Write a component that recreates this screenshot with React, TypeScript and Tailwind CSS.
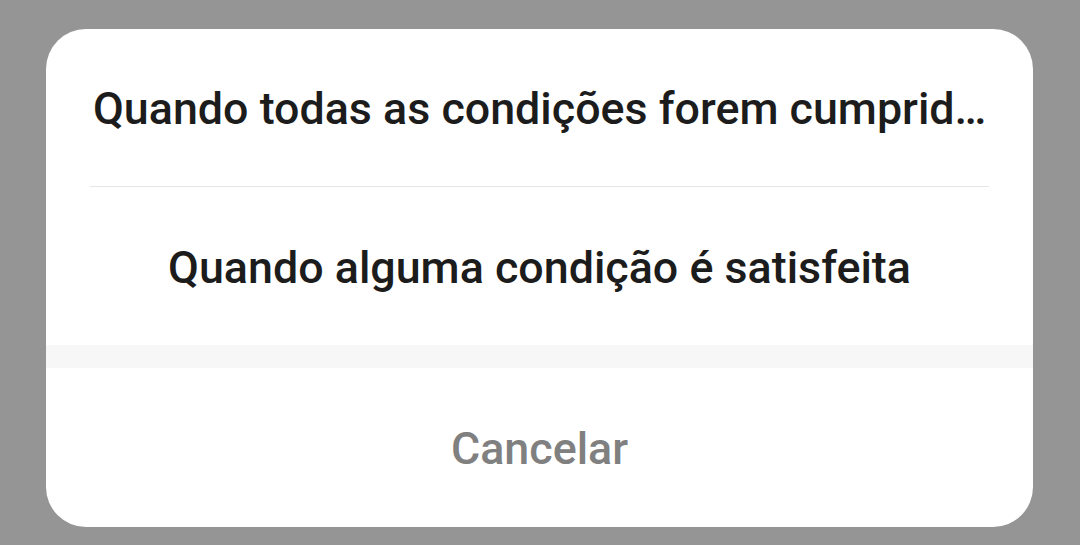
export default function App() {
    return (
        <div
            className="w-[1080px] h-[545px] bg-[#959595] pt-[29px] pl-[46px]"
            style={{ fontFamily: 'Roboto, "Noto Sans", sans-serif' }}
        >
            {/* Action sheet */}
            <div className="w-[987px] h-[498px] bg-white rounded-[40px] overflow-hidden flex flex-col">
                <div className="h-[158px] mx-[44px] pt-[2px] pl-[3px] flex items-center justify-center border-b border-[#e6e6e6]">
                    <span className="block truncate text-[44.8px] font-medium text-[#1c1c1c] leading-[1.2]">
                        Quando todas as condições forem cumpridas
                    </span>
                </div>
                <div className="h-[158px] mx-[44px] pt-[4px] flex items-center justify-center">
                    <span className="block truncate text-[44.8px] font-medium text-[#1c1c1c] leading-[1.2]">
                        Quando alguma condição é satisfeita
                    </span>
                </div>
                <div className="h-[23px] bg-[#f7f7f7]" />
                <div className="flex-1 pt-[3px] flex items-center justify-center">
                    <span className="text-[44.8px] font-medium text-[#808080] leading-[1.2]">Cancelar</span>
                </div>
            </div>
        </div>
    );
}
